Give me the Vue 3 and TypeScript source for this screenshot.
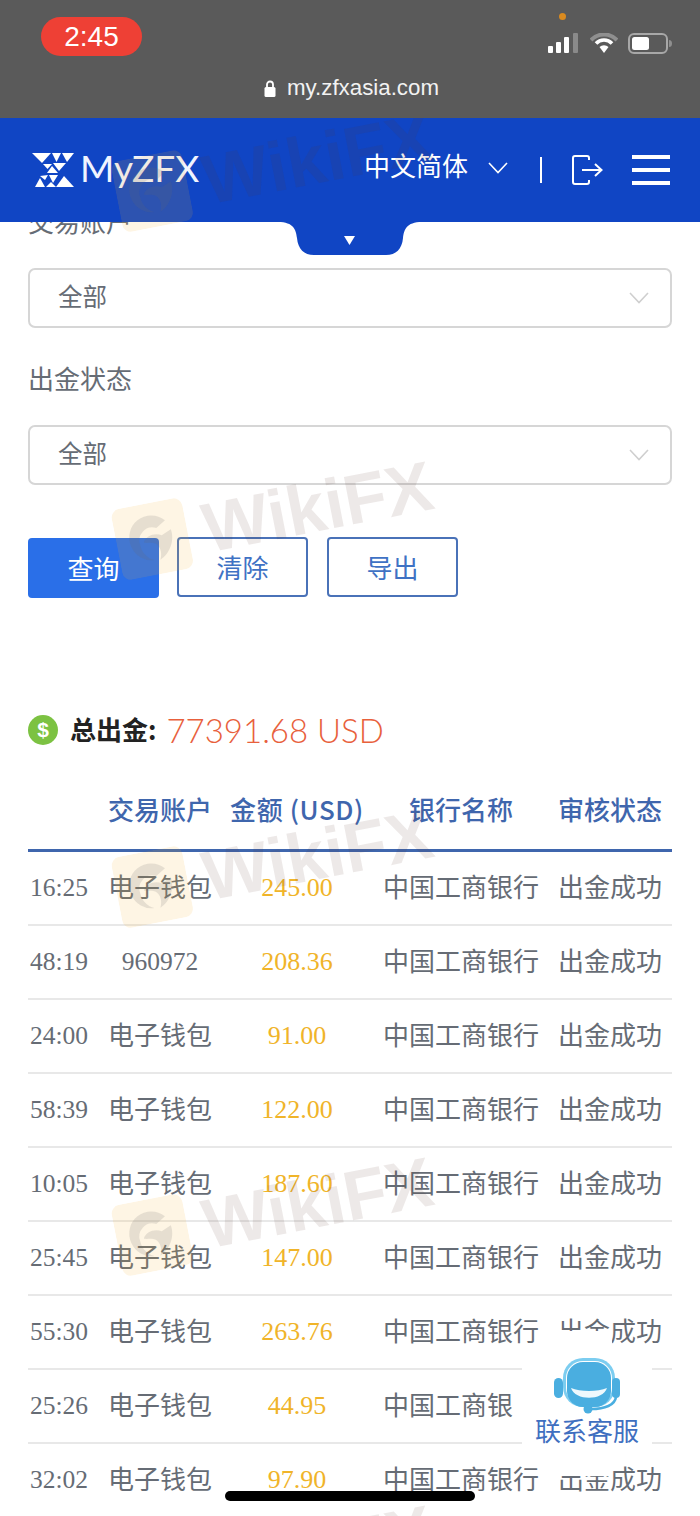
<template>
  <div class="page">
    <div class="browser-bar">
      <div class="status-row">
        <div class="clock">2:45</div>
        <div class="status-icons">
          <span class="cam-dot"></span>
          <svg width="32" height="20" viewBox="0 0 32 20">
            <rect x="0" y="13" width="5" height="7" rx="1" fill="#fff" />
            <rect x="8" y="9" width="5" height="11" rx="1" fill="#fff" />
            <rect x="16" y="4" width="5" height="16" rx="1" fill="#fff" />
            <rect x="25" y="0" width="5" height="20" rx="1" fill="#8a8a8a" />
          </svg>
          <svg width="28" height="20" viewBox="0 0 28 20">
            <path d="M1 7 A18 18 0 0 1 27 7" fill="none" stroke="#8f8f8f" stroke-width="4" />
            <path d="M6 10.5 A11 11 0 0 1 22 10.5" fill="none" stroke="#fff" stroke-width="3.6" />
            <path d="M9.5 14 L14 20 L18.500 14 A6.500 6.500 0 0 0 9.500 14 Z" fill="#fff" />
          </svg>
          <svg width="45" height="21" viewBox="0 0 45 21">
            <rect x="1" y="1" width="38" height="19" rx="5" fill="none" stroke="#a8a8a8" stroke-width="2" />
            <rect x="4" y="4" width="17" height="13" rx="2.500" fill="#fff" />
            <path d="M41 7 a3 3.500 0 0 1 0 7 Z" fill="#8f8f8f" />
          </svg>
        </div>
      </div>
      <div class="address">
        <svg width="12" height="17" viewBox="0 0 12 17">
          <path d="M3 7 V4.500 a3 3 0 0 1 6 0 V7" fill="none" stroke="#fff" stroke-width="1.800" />
          <rect x="0.500" y="7" width="11" height="10" rx="1.500" fill="#fff" />
        </svg>
        <span>my.zfxasia.com</span>
      </div>
    </div>

    <header class="topbar">
      <div class="brand">
        <svg width="42" height="34" viewBox="0 0 42 34">
          <polygon points="0,0 19,0 10,10" fill="#fff" />
          <polygon points="20,0 29,0 24.500,9" fill="#fff" />
          <polygon points="30,0 42,0 35,9" fill="#fff" />
          <polygon points="11,11 20,11 15.500,16" fill="#fff" />
          <polygon points="21,10 34,10 27,18" fill="#fff" />
          <polygon points="15,20 26,20 20,13" fill="#fff" />
          <polygon points="8,23 16,22 13,27" fill="#fff" />
          <polygon points="17,22 26,22 21,30" fill="#fff" />
          <polygon points="3,34 13,34 8,25" fill="#fff" />
          <polygon points="14,34 24,34 19,29" fill="#fff" />
          <polygon points="24,34 42,34 32,23" fill="#fff" />
        </svg>
        <span class="brand-name">MyZFX</span>
      </div>
      <div class="top-actions">
        <span class="lang">中文简体</span>
        <svg class="lang-arrow" width="20" height="12" viewBox="0 0 20 12">
          <path d="M1 1 L10 10.500 L19 1" fill="none" stroke="#fff" stroke-width="1.600" />
        </svg>
        <span class="divider"></span>
        <svg width="31" height="30" viewBox="0 0 31 30">
          <path d="M17 5 V3 a2 2 0 0 0 -2 -2 H3 a2 2 0 0 0 -2 2 V27 a2 2 0 0 0 2 2 H15 a2 2 0 0 0 2 -2 V25" fill="none" stroke="#fff" stroke-width="2" />
          <path d="M10 15 H29 M23 9 L29.500 15 L23 21" fill="none" stroke="#fff" stroke-width="2" />
        </svg>
        <div class="burger"><i></i><i></i><i></i></div>
      </div>
      <svg class="notch" width="144" height="34" viewBox="0 0 144 34">
        <path d="M0 0 H144 C128 0 126 8 125 16 C124 27 118 33 108 33 H36 C26 33 20 27 19 16 C18 8 16 0 0 0 Z" fill="#1045c4" />
        <polygon points="66,14 77,14 71.500,23" fill="#fff" />
      </svg>
    </header>

    <main class="content">
      <div class="field-label">交易账户</div>
      <div class="select">
        <span>全部</span>
        <svg width="20" height="12" viewBox="0 0 20 12">
          <path d="M1 1 L10 10.500 L19 1" fill="none" stroke="#cfcfcf" stroke-width="1.600" />
        </svg>
      </div>
      <div class="field-label second">出金状态</div>
      <div class="select">
        <span>全部</span>
        <svg width="20" height="12" viewBox="0 0 20 12">
          <path d="M1 1 L10 10.500 L19 1" fill="none" stroke="#cfcfcf" stroke-width="1.600" />
        </svg>
      </div>

      <div class="buttons">
        <button class="btn primary">查询</button>
        <button class="btn">清除</button>
        <button class="btn">导出</button>
      </div>

      <div class="total">
        <span class="coin">$</span>
        <span class="total-label">总出金:</span>
        <span class="total-value">77391.68 USD</span>
      </div>

      <div class="table">
        <div class="row head">
          <span></span>
          <span>交易账户</span>
          <span class="usd">金额 (USD)</span>
          <span>银行名称</span>
          <span>审核状态</span>
        </div>
        <div v-for="r in rows" :key="r.time" class="row">
          <span class="time">{{ r.time }}</span>
          <span :class="r.account === '电子钱包' ? 'cjk' : 'num'">{{ r.account }}</span>
          <span class="amount">{{ r.amount }}</span>
          <span class="cjk">中国工商银行</span>
          <span class="cjk">出金成功</span>
        </div>
      </div>
    </main>

    <div class="service">
      <svg width="68" height="57" viewBox="0 0 68 57">
        <rect x="10" y="1" width="52" height="49" rx="20" fill="#7ccdf0" />
        <rect x="13" y="4" width="46" height="44" rx="17" fill="#fff" />
        <rect x="14" y="5" width="44" height="45" rx="16" fill="#4aaee0" />
        <path d="M18 31 C27 35 45 35 54 31 C50 44 22 44 18 31 Z" fill="#eef8fd" />
        <rect x="1" y="21" width="9" height="20" rx="4.500" fill="#4aaee0" />
        <rect x="59" y="21" width="8" height="20" rx="4" fill="#4aaee0" />
        <path d="M63 40 C62 48 52 52 38 52" fill="none" stroke="#4aaee0" stroke-width="2.500" />
        <circle cx="35" cy="52" r="4.500" fill="#4aaee0" />
      </svg>
      <span>联系客服</span>
    </div>

    <div
      v-for="top in marks"
      :key="top"
      class="watermark"
      :style="{ top: top + 'px' }"
    >
      <svg width="72" height="72" viewBox="0 0 72 72">
        <rect width="72" height="72" rx="9" fill="#f5b52e" fill-opacity="0.13" />
        <path d="M14 40 A22 22 0 0 1 52 20 L42 26 A13 13 0 0 0 23 40 C23 48 28 54 34 57 A22 22 0 0 1 14 40 Z" fill="#6b6b6b" fill-opacity="0.16" />
        <path d="M27 38 C30 31 40 30 46 34 L56 30 C58 42 50 54 40 58 C44 50 42 42 36 40 C33 39 30 39 27 38 Z" fill="#6b6b6b" fill-opacity="0.16" />
      </svg>
      <span>WikiFX</span>
    </div>

    <div class="home-bar"></div>
  </div>
</template>

<script setup lang="ts">
interface Row {
  time: string
  account: string
  amount: string
}

const rows: Row[] = [
  { time: '16:25', account: '电子钱包', amount: '245.00' },
  { time: '48:19', account: '960972', amount: '208.36' },
  { time: '24:00', account: '电子钱包', amount: '91.00' },
  { time: '58:39', account: '电子钱包', amount: '122.00' },
  { time: '10:05', account: '电子钱包', amount: '187.60' },
  { time: '25:45', account: '电子钱包', amount: '147.00' },
  { time: '55:30', account: '电子钱包', amount: '263.76' },
  { time: '25:26', account: '电子钱包', amount: '44.95' },
  { time: '32:02', account: '电子钱包', amount: '97.90' },
]

const marks = [119, 467, 815, 1163, 1511]
</script>

<style scoped>
.page {
  position: relative;
  width: 700px;
  height: 1516px;
  overflow: hidden;
  background: #fff;
  font-family: "Noto Sans CJK SC", "Noto Sans", sans-serif;
}

.browser-bar {
  position: relative;
  z-index: 5;
  height: 118px;
  background: #5a5a5a;
  color: #fff;
}

.status-row {
  display: flex;
  justify-content: space-between;
  padding: 17px 27px 0 41px;
}

.clock {
  width: 101px;
  height: 39px;
  border-radius: 20px;
  background: #ee4035;
  font: 28px/39px "Liberation Sans", sans-serif;
  text-align: center;
}

.status-icons {
  position: relative;
  display: flex;
  align-items: flex-start;
  gap: 10px;
  padding-top: 16px;
}

.cam-dot {
  position: absolute;
  top: -4px;
  left: 11px;
  width: 7px;
  height: 7px;
  border-radius: 50%;
  background: #d98a1f;
}

.address {
  display: flex;
  justify-content: center;
  align-items: center;
  gap: 11px;
  margin-top: 16px;
  padding-left: 3px;
  font: 22.300px/32px "Liberation Sans", sans-serif;
  color: #f2f2f2;
}

.topbar {
  position: relative;
  z-index: 2;
  display: flex;
  justify-content: space-between;
  align-items: center;
  height: 104px;
  padding: 0 30px 0 32px;
  background: #1045c4;
  color: #fff;
}

.brand {
  display: flex;
  align-items: center;
  gap: 6px;
}

.brand-name {
  margin-top: -4px;
  font: 400 37px/40px Lato, sans-serif;
  color: #f0f4ff;
}

.top-actions {
  display: flex;
  align-items: center;
}

.lang {
  margin-top: -10px;
  font-size: 26px;
  line-height: 36px;
}

.lang-arrow {
  margin-left: 20px;
  margin-top: -4px;
}

.divider {
  width: 2px;
  height: 26px;
  margin: 0 30px 0 32px;
  background: #fff;
}

.burger {
  display: flex;
  flex-direction: column;
  gap: 9px;
  margin-left: 29px;
}

.burger i {
  display: block;
  width: 38px;
  height: 4px;
  background: #fff;
}

.notch {
  position: absolute;
  left: 278px;
  top: 104px;
}

.content {
  margin-top: -19px;
  padding: 0 28px;
  color: #666c75;
}

.field-label {
  font-size: 26px;
  line-height: 36px;
  margin-bottom: 29px;
}

.field-label.second {
  margin-top: 32px;
  margin-bottom: 29px;
}

.select {
  display: flex;
  justify-content: space-between;
  align-items: center;
  box-sizing: border-box;
  height: 60px;
  padding: 0 21px 0 28px;
  border: 2px solid #d6d6d6;
  border-radius: 7px;
  font-size: 24.500px;
}

.select span {
  margin-top: -6px;
}

.buttons {
  display: flex;
  align-items: flex-start;
  gap: 18px;
  margin-top: 52px;
}

.btn {
  box-sizing: border-box;
  width: 131px;
  height: 60px;
  padding: 0 0 1px;
  border: 2px solid #4a72b8;
  border-radius: 4px;
  background: transparent;
  color: #3f72c4;
  font-family: inherit;
  font-size: 26px;
}

.btn:last-child {
  margin-left: 1px;
}

.btn.primary {
  margin-top: 1px;
  border: none;
  background: #2a6fe8;
  color: #fff;
}

.total {
  display: flex;
  align-items: center;
  height: 40px;
  margin-top: 112px;
}

.coin {
  width: 30px;
  height: 30px;
  border-radius: 50%;
  background: #7cc242;
  color: #fff;
  font: 700 21px/30px "Liberation Sans", sans-serif;
  text-align: center;
}

.total-label {
  margin-left: 12px;
  margin-top: -4px;
  font-size: 26px;
  font-weight: 700;
  color: #222;
}

.total-value {
  margin-left: 10px;
  font: 300 33px/40px Lato, sans-serif;
  color: #e8603c;
}

.table {
  margin-top: 30px;
}

.row {
  display: grid;
  grid-template-columns: 80px 104px 170px 158px 132px;
  align-items: center;
  box-sizing: border-box;
  height: 74px;
  border-bottom: 2px solid #e8e8e8;
  font-size: 26px;
  text-align: center;
}

.row span:last-child {
  text-align: right;
  padding-right: 10px;
}

.row .cjk {
  padding-bottom: 6px;
}

.row.head {
  height: 72px;
  padding-bottom: 12px;
  border-bottom: 3px solid #3f66ad;
  color: #3f66ad;
  font-weight: 500;
}

.row .usd {
  letter-spacing: 0.6px;
}

.row .time,
.row .num,
.row .amount {
  font-family: "Liberation Serif", serif;
}

.row .time {
  font-size: 25.500px;
  text-align: left;
  padding-left: 2px;
}

.row .num {
  font-size: 25.500px;
}

.row .amount {
  color: #f0b429;
}

.service {
  position: absolute;
  z-index: 3;
  left: 522px;
  top: 1346px;
  display: flex;
  flex-direction: column;
  align-items: center;
  box-sizing: border-box;
  width: 130px;
  height: 116px;
  padding-top: 11px;
  background: #fff;
  color: #3f6fc0;
  font-size: 26px;
  line-height: 32px;
}

/* 盖住上下两行的“出金” */
.service::before {
  content: "";
  position: absolute;
  z-index: -1;
  left: 34px;
  top: -15px;
  width: 56px;
  height: 145px;
  background: #fff;
}

/* 盖住这一行被挡住的文字 */
.service::after {
  content: "";
  position: absolute;
  z-index: -1;
  left: -9px;
  top: 38px;
  width: 150px;
  height: 44px;
  background: #fff;
}

.watermark {
  position: absolute;
  z-index: 4;
  left: 114px;
  display: flex;
  align-items: center;
  gap: 16px;
  width: 324px;
  height: 96px;
  transform: rotate(-11deg);
  pointer-events: none;
  font: 700 70px/96px "Liberation Sans", sans-serif;
  color: rgba(90, 55, 45, 0.11);
}

.home-bar {
  position: absolute;
  z-index: 6;
  left: 225px;
  top: 1491px;
  width: 250px;
  height: 10px;
  border-radius: 5px;
  background: #000;
}
</style>

<style>
body {
  margin: 0;
}
</style>
